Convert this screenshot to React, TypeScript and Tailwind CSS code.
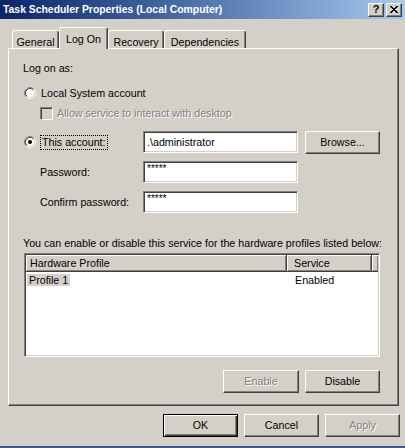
import React from 'react'

function Radio({ checked }: { checked?: boolean }) {
  return (
    <svg width="12" height="12" viewBox="0 0 12 12" className="shrink-0">
      <circle cx="6" cy="6" r="4.5" fill="#fff" />
      <path d="M2.11 9.89 A5.5 5.5 0 0 1 9.89 2.11" stroke="#808080" fill="none" />
      <path d="M9.89 2.11 A5.5 5.5 0 0 1 2.11 9.89" stroke="#fff" fill="none" />
      <path d="M2.82 9.18 A4.5 4.5 0 0 1 9.18 2.82" stroke="#404040" fill="none" />
      <path d="M9.18 2.82 A4.5 4.5 0 0 1 2.82 9.18" stroke="#d4d0c8" fill="none" />
      {checked && <circle cx="6" cy="6" r="2" fill="#000" />}
    </svg>
  )
}

function Field({ value, small }: { value: string; small?: boolean }) {
  return (
    <div className="w-[155px] h-[22px] bg-white border border-t-[#808080] border-l-[#808080] border-r-white border-b-white shadow-[inset_1px_1px_#404040,inset_-1px_-1px_#d4d0c8] pl-[3px] flex items-center">
      <span className={small ? 'text-[10px] leading-[10px] -mt-[6px]' : 'leading-[14px]'}>{value}</span>
    </div>
  )
}

function Btn({
  label,
  width,
  disabled,
  primary,
}: {
  label: string
  width: string
  disabled?: boolean
  primary?: boolean
}) {
  return (
    <div
      className={`${width} h-[23px] flex items-center justify-center bg-[#d4d0c8] ${
        primary
          ? 'border border-black shadow-[inset_1px_1px_#fff,inset_-1px_-1px_#404040,inset_-2px_-2px_#808080]'
          : 'border border-t-white border-l-white border-r-[#404040] border-b-[#404040] shadow-[inset_-1px_-1px_#808080]'
      } ${disabled ? 'text-[#808080] [text-shadow:1px_1px_0_#fff]' : 'text-black'}`}
    >
      {label}
    </div>
  )
}

export default function App() {
  const tabs = [
    { label: 'General', w: 'w-[47px]' },
    { label: 'Log On', w: 'w-[49px]', active: true },
    { label: 'Recovery', w: 'w-[56px]' },
    { label: 'Dependencies', w: 'w-[82px]' },
  ]

  return (
    <div className="w-[405px] h-[448px] bg-[#d4d0c8] flex flex-col text-[10.7px] text-black font-['Liberation_Sans',Arial,sans-serif] overflow-hidden">
      {/* title bar */}
      <div className="h-[19px] bg-linear-to-r from-[#0a246a] to-[#a6caf0] flex items-center pl-[3px] pr-[3px]">
        <span className="text-white font-bold text-[10.4px]">
          Task Scheduler Properties (Local Computer)
        </span>
        <div className="ml-auto flex gap-[2px]">
          <div className="w-[16px] h-[14px] bg-[#d4d0c8] border border-t-white border-l-white border-r-[#404040] border-b-[#404040] shadow-[inset_-1px_-1px_#808080] flex items-center justify-center font-bold text-[11px] leading-none">
            ?
          </div>
          <div className="w-[16px] h-[14px] bg-[#d4d0c8] border border-t-white border-l-white border-r-[#404040] border-b-[#404040] shadow-[inset_-1px_-1px_#808080] flex items-center justify-center">
            <svg width="8" height="7" viewBox="0 0 8 7">
              <path d="M0 0 L7 7 M1 0 L8 7 M7 0 L0 7 M8 0 L1 7" stroke="#000" strokeWidth="1" />
            </svg>
          </div>
        </div>
      </div>

      {/* tabs */}
      <div className="mt-[8px] pl-[12px] flex items-end h-[21px] relative z-10">
        {tabs.map((t) =>
          t.active ? (
            <div
              key={t.label}
              className={`${t.w} h-[22px] -mb-px bg-[#d4d0c8] border-t border-l border-white border-r border-r-[#404040] rounded-t-[3px] shadow-[inset_-1px_0_#808080] flex justify-center pt-[3px]`}
            >
              {t.label}
            </div>
          ) : (
            <div
              key={t.label}
              className={`${t.w} h-[18px] bg-[#d4d0c8] border-t border-l border-white border-r border-r-[#404040] rounded-t-[3px] shadow-[inset_-1px_0_#808080] flex justify-center pt-[3px]`}
            >
              {t.label}
            </div>
          )
        )}
      </div>

      {/* panel */}
      <div className="ml-[8px] w-[391px] h-[358px] border-t border-l border-white border-r border-b border-r-[#404040] border-b-[#404040] shadow-[inset_-1px_-1px_#808080] pl-[14px] pt-[12px]">
        <div className="h-[14px] leading-[14px]">Log on as:</div>

        <div className="mt-[11px] h-[14px] flex items-center ml-[1px]">
          <Radio />
          <span className="ml-[5px]">Local System account</span>
        </div>

        <div className="mt-[6px] h-[14px] flex items-center ml-[17px]">
          <div className="w-[13px] h-[13px] bg-[#d4d0c8] border border-t-[#808080] border-l-[#808080] border-r-white border-b-white shadow-[inset_1px_1px_#404040,inset_-1px_-1px_#d4d0c8]" />
          <span className="ml-[4px] text-[#808080] [text-shadow:1px_1px_0_#fff]">
            Allow service to interact with desktop
          </span>
        </div>

        <div className="mt-[11px] h-[22px] flex items-center">
          <div className="w-[120px] flex items-center pl-[1px]">
            <Radio checked />
            <span className="ml-[4px] px-px border border-dotted border-black leading-[13px]">
              This account:
            </span>
          </div>
          <Field value=".\administrator" />
          <div className="ml-[7px]">
            <Btn label="Browse..." width="w-[75px]" />
          </div>
        </div>

        <div className="mt-[8px] h-[22px] flex items-center">
          <div className="w-[120px] pl-[17px]">Password:</div>
          <Field value="*****" small />
        </div>

        <div className="mt-[8px] h-[22px] flex items-center">
          <div className="w-[120px] pl-[17px]">Confirm password:</div>
          <Field value="*****" small />
        </div>

        <div className="mt-[23px] h-[14px] leading-[14px]">
          You can enable or disable this service for the hardware profiles listed below:
        </div>

        <div className="mt-[3px] ml-[1px] w-[356px] h-[104px] bg-white border border-t-[#808080] border-l-[#808080] border-r-white border-b-white shadow-[inset_1px_1px_#404040,inset_-1px_-1px_#d4d0c8] p-[1px]">
          <div className="flex h-[17px] bg-[#d4d0c8]">
            <div className="w-[261px] pl-[4px] flex items-center shadow-[inset_1px_1px_#fff,inset_-1px_-1px_#808080] border-r border-b border-[#404040]">
              Hardware Profile
            </div>
            <div className="w-[85px] pl-[7px] flex items-center shadow-[inset_1px_1px_#fff,inset_-1px_-1px_#808080] border-r border-b border-[#404040]">
              Service
            </div>
            <div className="flex-1 shadow-[inset_1px_1px_#fff,inset_-1px_-1px_#808080] border-b border-[#404040]" />
          </div>
          <div className="flex h-[14px] mt-px items-center">
            <div className="w-[261px]">
              <span className="ml-[1px] px-[2px] bg-[#d4d0c8] leading-[12px] inline-block">Profile 1</span>
            </div>
            <div className="pl-[8px]">Enabled</div>
          </div>
        </div>

        <div className="mt-[13px] flex ml-[200px] gap-[6px]">
          <Btn label="Enable" width="w-[76px]" disabled />
          <Btn label="Disable" width="w-[75px]" />
        </div>
      </div>

      {/* dialog buttons */}
      <div className="mt-[8px] flex justify-end pr-[5px] gap-[6px]">
        <Btn label="OK" width="w-[75px]" primary />
        <Btn label="Cancel" width="w-[75px]" />
        <Btn label="Apply" width="w-[75px]" disabled />
      </div>

      <div className="mt-auto h-[2px] bg-[#3c5a85]" />
    </div>
  )
}
